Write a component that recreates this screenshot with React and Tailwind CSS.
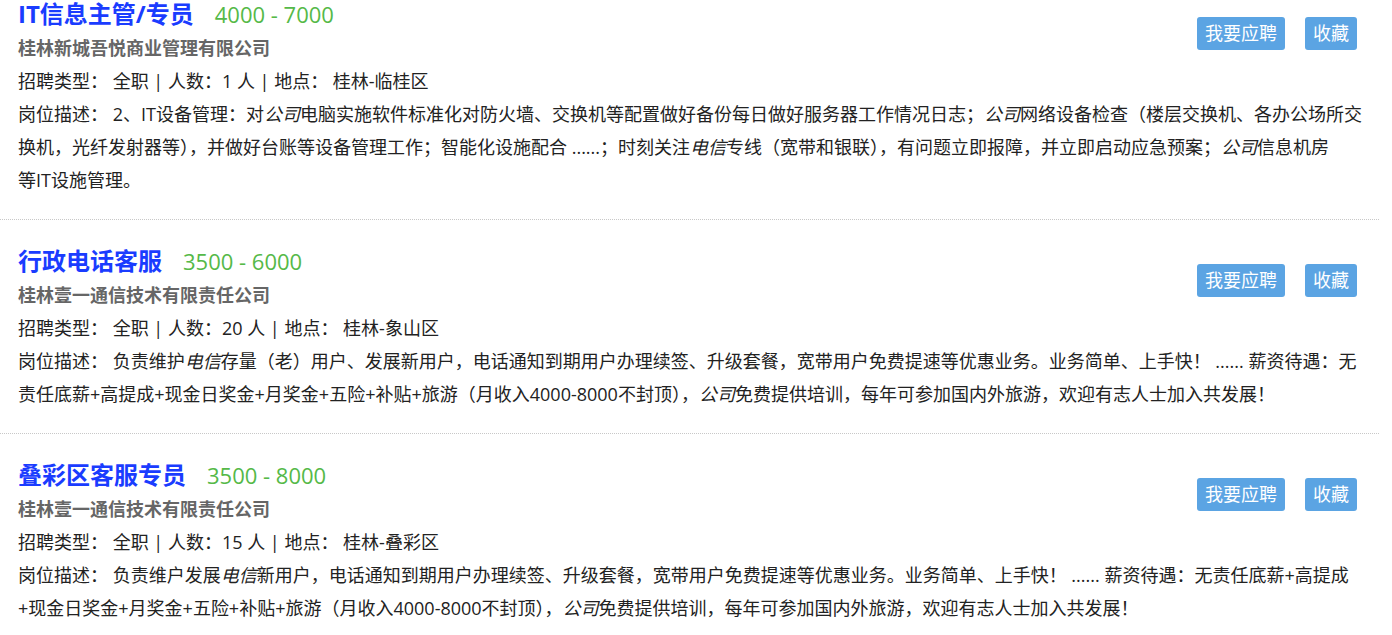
import React from 'react';

const jobs = [
  {
    title: 'IT信息主管/专员',
    salary: '4000 - 7000',
    company: '桂林新城吾悦商业管理有限公司',
    count: '1',
    place: '桂林-临桂区',
    desc: [
      '2、IT设备管理：对', ['公司'], '电脑实施软件标准化对防火墙、交换机等配置做好备份每日做好服务器工作情况日志；', ['公司'],
      '网络设备检查（楼层交换机、各办公场所交换机，光纤发射器等），并做好台账等设备管理工作；智能化设施配合 ......；时刻关注', ['电信'],
      '专线（宽带和银联），有问题立即报障，并立即启动应急预案；', ['公司'], '信息机房', null, '等IT设施管理。',
    ],
  },
  {
    title: '行政电话客服',
    salary: '3500 - 6000',
    company: '桂林壹一通信技术有限责任公司',
    count: '20',
    place: '桂林-象山区',
    desc: [
      '负责维护', ['电信'], '存量（老）用户、发展新用户，电话通知到期用户办理续签、升级套餐，宽带用户免费提速等优惠业务。业务简单、上手快！ ...... 薪资待遇：无责任底薪+高提成+现金日奖金+月奖金+五险+补贴+旅游（月收入4000-8000不封顶），',
      ['公司'], '免费提供培训，每年可参加国内外旅游，欢迎有志人士加入共发展！',
    ],
  },
  {
    title: '叠彩区客服专员',
    salary: '3500 - 8000',
    company: '桂林壹一通信技术有限责任公司',
    count: '15',
    place: '桂林-叠彩区',
    desc: [
      '负责维户发展', ['电信'], '新用户，电话通知到期用户办理续签、升级套餐，宽带用户免费提速等优惠业务。业务简单、上手快！ ...... 薪资待遇：无责任底薪+高提成+现金日奖金+月奖金+五险+补贴+旅游（月收入4000-8000不封顶），',
      ['公司'], '免费提供培训，每年可参加国内外旅游，欢迎有志人士加入共发展！',
    ],
  },
];

const JobItem = ({ job, first }) => {
  return (
    <div className={(first ? 'pt-0' : 'pt-[27px]') + ' pb-[22px] pl-[18px] pr-[14px] border-b border-dotted border-[#c8c8c8]'}>
      {/* buttons sit to the right, text wraps under them */}
      <div className="float-right mt-[17px] mr-[8px] flex gap-[20px]">
        <button className="h-[33px] px-[8px] rounded-[3px] bg-[#5ba4e3] text-white text-[18px] leading-[33px]">我要应聘</button>
        <button className="h-[33px] px-[8px] rounded-[3px] bg-[#5ba4e3] text-white text-[18px] leading-[33px]">收藏</button>
      </div>
      <div className="flex items-baseline leading-[28px]">
        <span className="text-[24px] font-bold text-[#1a3cff]">{job.title}</span>
        <span className="ml-[21px] text-[22px] text-[#55b948]">{job.salary}</span>
      </div>
      <div className="mt-[4px] text-[18px] leading-[33px] font-bold text-[#666]">{job.company}</div>
      <div className="text-[18px] leading-[33px] text-[#222]">
        招聘类型： 全职 | 人数：{job.count} 人 | 地点： {job.place}
      </div>
      <p className="text-[18px] leading-[33px] text-[#222]">
        岗位描述：{' '}
        {job.desc.map((part, i) => {
          if (part === null) return <br key={i} />;
          return Array.isArray(part) ? <em key={i} className="italic">{part[0]}</em> : <span key={i}>{part}</span>;
        })}
      </p>
    </div>
  );
};

export default function App() {
  return (
    <div className="w-[1379px] bg-white font-['Open_Sans','Noto_Sans_CJK_SC',sans-serif]">
      {jobs.map((job, i) => (
        <JobItem key={i} job={job} first={i === 0} />
      ))}
    </div>
  );
}
